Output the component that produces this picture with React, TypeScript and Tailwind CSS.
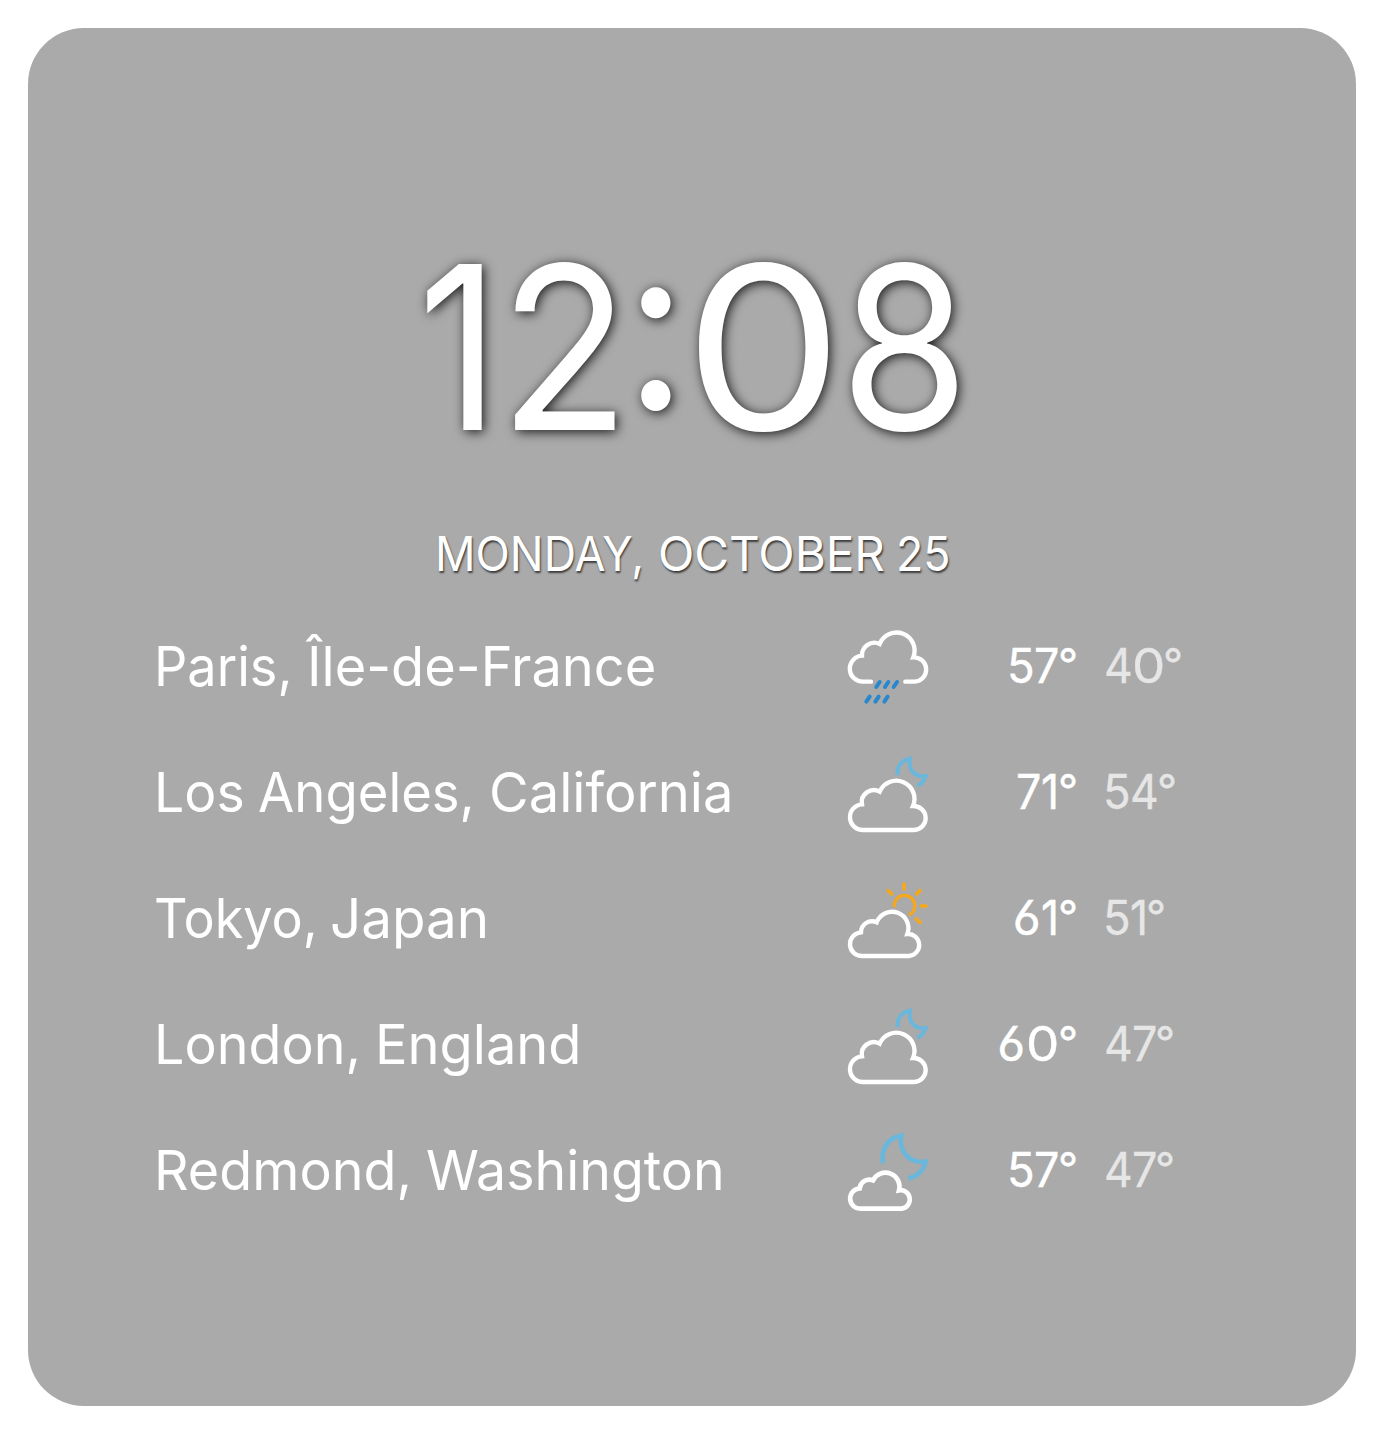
import type { ReactNode } from "react";

type Word = { text: string; width: number; stretch: number };
type Glyph = { width: number; offset: number; x: number; y: number };

const HOURS: Word[] = [
  { text: "1", width: 81.3, stretch: 0.875 },
  { text: "2", width: 125, stretch: 0.94 },
];

const MINUTES: Word[] = [
  { text: "0", width: 155.6, stretch: 1.105 },
  { text: "8", width: 125, stretch: 0.915 },
];

const DATE: Word[] = [
  { text: "MONDAY,", width: 222.6, stretch: 0.935 },
  { text: "OCTOBER", width: 237.9, stretch: 0.99 },
  { text: "25", width: 60, stretch: 0.934 },
];

const GLYPHS: Record<string, Glyph> = {
  "0": { width: 33.2, offset: -0.7, x: 1.1, y: 1 },
  "1": { width: 17.7, offset: -0.9, x: 0.926, y: 1 },
  "4": { width: 28.3, offset: -0.6, x: 0.927, y: 1 },
  "5": { width: 26.5, offset: -1.1, x: 0.95, y: 1 },
  "6": { width: 28.7, offset: -0.9, x: 1, y: 1 },
  "7": { width: 25.2, offset: -0.7, x: 0.935, y: 1 },
  "°": { width: 17, offset: -2.4, x: 0.92, y: 0.92 },
};

function Cloud({ d, width = 13 }: { d: string; width?: number }) {
  return <path d={d} stroke="#ffffff" strokeWidth={width} strokeLinecap="round" strokeMiterlimit="10" />;
}

function Icon({ children }: { children: ReactNode }) {
  return (
    <svg className="h-[92px] w-[106px] shrink-0" viewBox="0 0 318 276" fill="none">
      {children}
    </svg>
  );
}

function RainIcon() {
  return (
    <Icon>
      <Cloud d="M105 185H83A39 39 0 0 1 78 107A37 37 0 0 1 131 72A54 54 0 0 1 232 112A36.5 36.5 0 0 1 236 185H208" />
      <path
        d="M131 186L121 201M157 186L147 201M183 186L173 201M101 230L91 245M128 230L118 245M155 230L145 245"
        stroke="#2987cd"
        strokeWidth="12"
        strokeLinecap="round"
      />
    </Icon>
  );
}

function CloudyNightIcon() {
  return (
    <Icon>
      <path
        d="M185 88C182 62 197 41 222 38C216 72 236 94 269 90C264 104 256 114 244 119"
        stroke="#6bb7dc"
        strokeWidth="12"
      />
      <Cloud d="M83 252A38.5 38.5 0 0 1 78 175A36 36 0 0 1 131 137A54 54 0 0 1 231 180A36 36 0 0 1 235 252Z" />
    </Icon>
  );
}

function PartlySunnyIcon() {
  return (
    <Icon>
      <g stroke="#f6a81c" strokeLinecap="round">
        <path d="M175 106A31 31 0 1 1 219 129" strokeWidth="10" strokeLinecap="butt" />
        <path
          d="M204 36V51M157 56L167 66M252 56L242 66M256 102H270M241 141L252 151"
          strokeWidth="11"
        />
      </g>
      <Cloud d="M80 252A35.5 35.5 0 0 1 75 181A33 33 0 0 1 122 151A49 49 0 0 1 214 186A33 33 0 0 1 219 252Z" />
    </Icon>
  );
}

function ClearNightIcon() {
  return (
    <Icon>
      <path
        d="M141 118C133 78 156 40 196 35C187 82 220 120 269 113C262 140 243 159 217 163"
        stroke="#6bb7dc"
        strokeWidth="14"
      />
      <Cloud
        width={14}
        d="M75 254A30.5 30.5 0 0 1 71 193A29 29 0 0 1 111 169A42 42 0 0 1 189 199A27.5 27.5 0 0 1 198 254Z"
      />
    </Icon>
  );
}

const CITIES: { words: Word[]; icon: ReactNode; high: string; low: string }[] = [
  {
    words: [
      { text: "Paris,", width: 152.6, stretch: 0.95 },
      { text: "Île-de-France", width: 360, stretch: 0.984 },
    ],
    icon: <RainIcon />,
    high: "57°",
    low: "40°",
  },
  {
    words: [
      { text: "Los", width: 103.8, stretch: 0.974 },
      { text: "Angeles,", width: 230.7, stretch: 0.957 },
      { text: "California", width: 250, stretch: 0.987 },
    ],
    icon: <CloudyNightIcon />,
    high: "71°",
    low: "54°",
  },
  {
    words: [
      { text: "Tokyo,", width: 175.2, stretch: 0.947 },
      { text: "Japan", width: 160, stretch: 0.996 },
    ],
    icon: <PartlySunnyIcon />,
    high: "61°",
    low: "51°",
  },
  {
    words: [
      { text: "London,", width: 220.2, stretch: 0.978 },
      { text: "England", width: 210, stretch: 0.985 },
    ],
    icon: <CloudyNightIcon />,
    high: "60°",
    low: "47°",
  },
  {
    words: [
      { text: "Redmond,", width: 271.8, stretch: 0.979 },
      { text: "Washington", width: 310, stretch: 0.975 },
    ],
    icon: <ClearNightIcon />,
    high: "57°",
    low: "47°",
  },
];

function Words({ words }: { words: Word[] }) {
  return (
    <>
      {words.map((w) => (
        <span
          key={w.text}
          className="block shrink-0 origin-left whitespace-nowrap"
          style={{ width: w.width, transform: `scaleX(${w.stretch})` }}
        >
          {w.text}
        </span>
      ))}
    </>
  );
}

function Temperature({ value }: { value: string }) {
  return (
    <>
      {[...value].map((ch, i) => {
        const g = GLYPHS[ch];
        return (
          <span key={i} className="block shrink-0" style={{ width: g.width }}>
            <span
              className="block w-0 origin-[0_6px]"
              style={{ marginLeft: g.offset, transform: `scale(${g.x}, ${g.y})` }}
            >
              {ch}
            </span>
          </span>
        );
      })}
    </>
  );
}

export default function App() {
  return (
    <div className="flex h-[1434px] w-[1384px] bg-white p-7 font-['Inter',sans-serif] font-normal text-white antialiased">
      <main className="flex flex-1 flex-col rounded-[56px] bg-[#aaaaaa] pt-[205px]">
        <div className="ml-[390.2px] flex text-[228px] leading-none drop-shadow-[2px_2px_6px_rgba(0,0,0,0.85)] [font-feature-settings:'case']">
          <Words words={HOURS} />
          <span className="block w-[60px] shrink-0 origin-left translate-y-[2px] scale-x-[0.97] scale-y-[1.03]">:</span>
          <Words words={MINUTES} />
        </div>
        <div className="mt-[68.5px] ml-[407.4px] flex text-[48px] leading-none [text-shadow:1px_2px_2px_rgba(0,0,0,0.65)]">
          <Words words={DATE} />
        </div>
        <div className="mt-[25.5px] ml-[126.4px] flex flex-col">
          {CITIES.map((city) => (
            <div key={city.words[0].text} className="flex h-[126px] items-center">
              <div className="flex w-[681.6px] shrink-0 text-[55px] leading-none">
                <Words words={city.words} />
              </div>
              {city.icon}
              <div className="flex w-[135px] shrink-0 justify-end text-[48px] leading-none [font-feature-settings:'cv03'] [-webkit-text-stroke:0.4px_#ffffff]">
                <Temperature value={city.high} />
              </div>
              <div className="ml-[27.2px] flex text-[48px] leading-none text-[#e6e6e6] [-webkit-text-stroke:0.3px_#e6e6e6]">
                <Temperature value={city.low} />
              </div>
            </div>
          ))}
        </div>
      </main>
    </div>
  );
}
